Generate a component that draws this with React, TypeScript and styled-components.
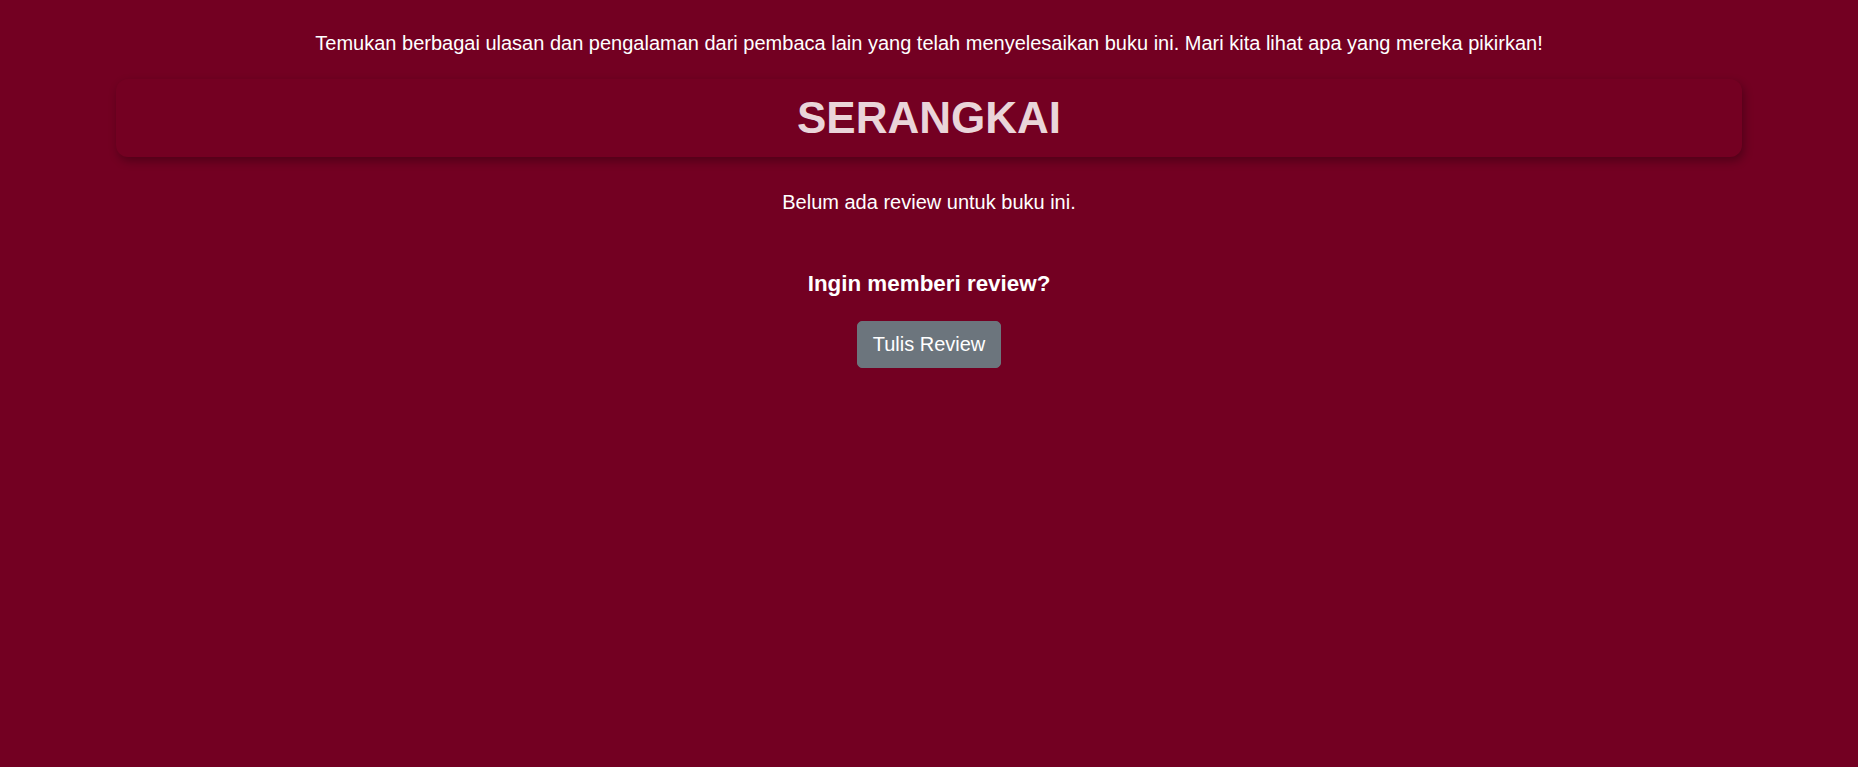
import React from "react";
import styled, { createGlobalStyle } from "styled-components";

const GlobalStyle = createGlobalStyle`
  html, body {
    margin: 0;
    padding: 0;
    background-color: #730022;
    font-family: "Liberation Sans", Arial, sans-serif;
    color: #ffffff;
  }
`;

const Page = styled.div`
  min-height: 100vh;
  padding-top: 32px;
  display: flex;
  flex-direction: column;
  align-items: center;
`;

const Intro = styled.p`
  margin: 0 0 24px;
  font-size: 20px;
  line-height: 23px;
  text-align: center;
`;

const TitleCard = styled.div`
  width: 87.5%;
  box-sizing: border-box;
  padding: 15px 0;
  background-color: #740022;
  border-radius: 12px;
  box-shadow: 2px 4px 10px rgba(0, 0, 0, 0.3);
  text-align: center;
`;

const BookTitle = styled.h1`
  margin: 0;
  font-size: 44px;
  line-height: 48px;
  font-weight: 700;
  color: #ead5d9;
`;

const EmptyText = styled.p`
  margin: 34px 0 0;
  font-size: 20px;
  line-height: 23px;
  text-align: center;
`;

const AskHeading = styled.h3`
  margin: 57px 0 0;
  font-size: 22.4px;
  line-height: 26px;
  font-weight: 700;
`;

const ReviewButton = styled.button`
  margin-top: 24px;
  padding: 8px 15px;
  font-family: inherit;
  font-size: 20px;
  line-height: 29px;
  color: #ffffff;
  background-color: #6c757d;
  border: 1px solid #6c757d;
  border-radius: 5px;
  cursor: pointer;
`;

export default function App() {
  return (
    <>
      <GlobalStyle />
      <Page>
        <Intro>
          Temukan berbagai ulasan dan pengalaman dari pembaca lain yang telah
          menyelesaikan buku ini. Mari kita lihat apa yang mereka pikirkan!
        </Intro>
        <TitleCard>
          <BookTitle>SERANGKAI</BookTitle>
        </TitleCard>
        <EmptyText>Belum ada review untuk buku ini.</EmptyText>
        <AskHeading>Ingin memberi review?</AskHeading>
        <ReviewButton>Tulis Review</ReviewButton>
      </Page>
    </>
  );
}
